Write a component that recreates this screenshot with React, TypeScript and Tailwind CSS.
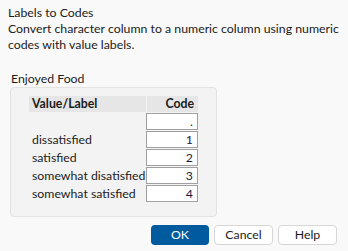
const rows = [
  { label: '', code: '.' },
  { label: 'dissatisfied', code: '1' },
  { label: 'satisfied', code: '2' },
  { label: 'somewhat disatisfied', code: '3' },
  { label: 'somewhat satisfied', code: '4' },
];

export default function App() {
  return (
    <div
      className="w-[348px] h-[251px] bg-[#f9f9f9] text-[12.3px] text-[#1b1b1b] flex flex-col whitespace-nowrap"
      style={{ fontFamily: 'Lato, "Liberation Sans", sans-serif' }}
    >
      {/* Header text */}
      <div className="pl-[8px] pt-[5px] leading-[16px]">
        <p>Labels to Codes</p>
        <p>Convert character column to a numeric column using numeric</p>
        <p>codes with value labels.</p>
      </div>

      <p className="pl-[11px] mt-[18px] leading-[16px]">Enjoyed Food</p>

      {/* Panel */}
      <div className="ml-[10px] w-[207px] h-[130px] rounded-[4px] border border-[#e3e3e3] bg-[#f3f3f3] pl-[18px] pt-[8px]">
        <div className="w-[169px]">
          <div className="flex h-[16px] leading-[16px] font-bold">
            <div className="w-[117px] bg-[#e6e6e6] pl-[3px]">Value/Label</div>
            <div className="w-[51px] ml-[1px] bg-[#e6e6e6] text-right pr-[4px]">Code</div>
          </div>
          <div className="flex flex-col gap-[1px] mt-[1px]">
            {rows.map((r, i) => (
              <div key={i} className="flex h-[17px]">
                <div className="w-[117px] pl-[3px] leading-[17px]">{r.label}</div>
                <div className="w-[52px] border border-[#a0a0a0] bg-white text-right pr-[4px] leading-[15px] text-[#1a1a40]">
                  {r.code}
                </div>
              </div>
            ))}
          </div>
        </div>
      </div>

      {/* Buttons */}
      <div className="flex justify-end gap-[5px] pr-[11px] mt-[8px]">
        <button className="w-[58px] h-[20px] rounded-[4px] bg-[#005a9e] text-white leading-[20px]">OK</button>
        <button className="w-[59px] h-[20px] rounded-[4px] bg-white border border-[#d6d6d6] leading-[18px]">Cancel</button>
        <button className="w-[59px] h-[20px] rounded-[4px] bg-white border border-[#d6d6d6] leading-[18px]">Help</button>
      </div>
    </div>
  );
}
